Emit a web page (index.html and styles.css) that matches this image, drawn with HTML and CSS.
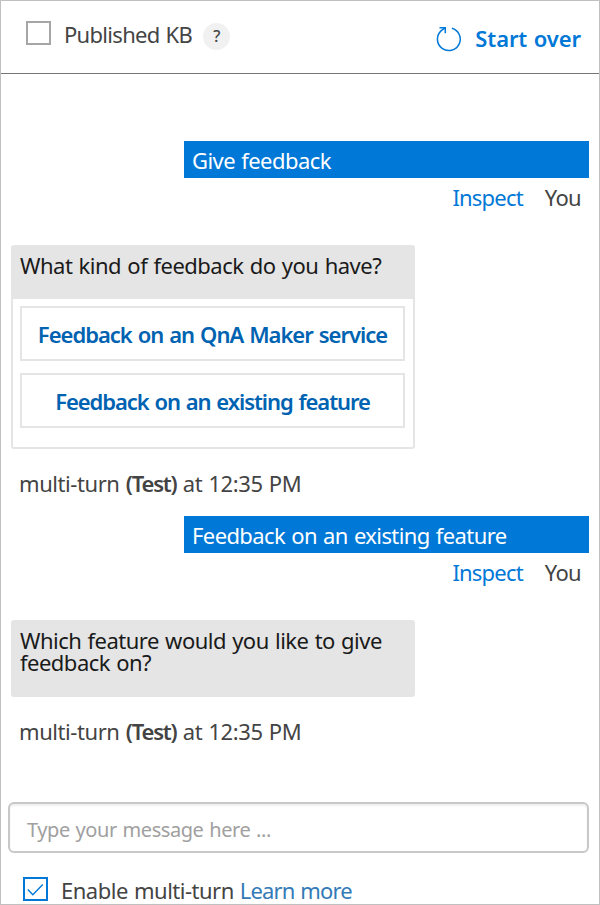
FILE: index.html
```html
<!DOCTYPE html>
<html lang="en">
<head>
<meta charset="utf-8">
<title>Test panel</title>
<link rel="stylesheet" href="styles.css">
</head>
<body>
<main class="panel">
  <header class="header">
    <span class="checkbox"></span>
    <span class="published">Published KB</span>
    <span class="help">?</span>
    <a class="start-over">
      <svg class="restart" width="26" height="26" viewBox="0 0 26 26" fill="none" stroke="#0078d7" stroke-width="1.5"><path d="M15.9 2.2A11.4 11.4 0 1 1 5 4.9L9 1.8"/><path d="M3.5 1.7H9.3V7.3"/></svg>
      <span class="start-label">Start over</span>
    </a>
  </header>
  <section class="chat">
    <div class="sent give">Give feedback</div>
    <div class="sent-meta"><a class="inspect">Inspect</a><span class="you">You</span></div>
    <div class="card">
      <div class="question">What kind of feedback do you have?</div>
      <div class="options">
        <button class="option">Feedback on an QnA Maker service</button>
        <button class="option narrow">Feedback on an existing feature</button>
      </div>
    </div>
    <div class="bot-meta">multi-turn <b>(Test)</b> at 12:35 PM</div>
    <div class="sent second">Feedback on an existing feature</div>
    <div class="sent-meta"><a class="inspect">Inspect</a><span class="you">You</span></div>
    <div class="reply">Which feature would you like to give<br>feedback on?</div>
    <div class="bot-meta">multi-turn <b>(Test)</b> at 12:35 PM</div>
  </section>
  <footer class="footer">
    <div class="message">Type your message here ...</div>
    <div class="multi">
      <span class="checkbox checked"><svg width="21" height="21" viewBox="0 0 21 21" fill="none" stroke="#0078d7" stroke-width="1.4"><path d="M2.8 10.5L7.8 15.8L17.8 5.6"/></svg></span>
      <span class="enable">Enable multi-turn</span>
      <a class="learn">Learn more</a>
    </div>
  </footer>
</main>
</body>
</html>
```

FILE: styles.css
```css
* { box-sizing: border-box; }
body {
  margin: 0;
  background: #fff;
  color: #444;
  font-family: "Noto Sans", "Open Sans", sans-serif;
  font-size: 22px;
  line-height: 30px;
  letter-spacing: -0.5px;
  word-spacing: 1px;
}
.panel {
  width: 600px;
  height: 905px;
  border: 1px solid #c0c0c0;
  overflow: hidden;
  display: flex;
  flex-direction: column;
  white-space: nowrap;
}
.header {
  height: 73px;
  flex: none;
  border-bottom: 1px solid #767676;
  display: flex;
  align-items: flex-start;
  padding: 20px 18px 0 25px;
}
.checkbox {
  width: 25px;
  height: 24px;
  flex: none;
  border: 2px solid #a6a6a6;
}
.published { margin: -2px 0 0 13px; width: 129px; letter-spacing: -0.7px; }
.help {
  width: 27px;
  height: 27px;
  margin: 2px 0 0 10px;
  border-radius: 50%;
  background: #f1f1f1;
  font-size: 16px;
  font-weight: 500;
  line-height: 27px;
  text-align: center;
}
.start-over {
  margin-left: auto;
  display: flex;
  color: #0078d7;
}
.restart { margin: 5px 13px 0 0; }
.start-label { font-weight: 600; margin-top: 2px; letter-spacing: -0.1px; }
.chat { flex: none; height: 728px; padding: 67px 10px 0; }
.sent {
  width: 405px;
  height: 37px;
  margin-left: auto;
  padding: 4px 8px;
  background: #0078d7;
  color: #fff;
  letter-spacing: -0.6px;
}
.give { letter-spacing: -0.55px; }
.sent-meta {
  display: flex;
  justify-content: flex-end;
  gap: 22px;
  height: 30px;
  margin: 4px 8px 33px 0;
}
.inspect { color: #0078d7; letter-spacing: -0.8px; }
.you { letter-spacing: -0.7px; }
.card {
  width: 404px;
  height: 204px;
  border: 2px solid #e5e5e5;
  border-radius: 3px;
}
.question { height: 52px; background: #e5e5e5; color: #1a1a1a; padding: 3px 7px; letter-spacing: -0.5px; }
.options { display: grid; gap: 12px; padding: 7px 8px 0 7px; }
.option {
  height: 55px;
  padding: 0;
  border: 2px solid #e5e5e5;
  background: #fff;
  color: #0063b1;
  font: 600 22px/30px "Noto Sans", "Open Sans", sans-serif;
  letter-spacing: -1px;
  word-spacing: 1.2px;
}
.narrow { letter-spacing: -1.07px; }
.bot-meta { margin: 19px 0 0 8px; height: 31px; letter-spacing: -0.43px; }
.bot-meta b { font-weight: 600; letter-spacing: -1.2px; }
.second { margin-top: 17px; }
.reply {
  width: 404px;
  height: 77px;
  padding: 9px 9px;
  border-radius: 3px;
  background: #e5e5e5;
  color: #1a1a1a;
  line-height: 22px;
  letter-spacing: -0.51px;
}
.footer { padding: 0 10px 0 7px; }
.message {
  height: 51px;
  border: 2px solid #c8c8c8;
  border-radius: 6px;
  box-shadow: inset 0 2px 2px #f0f0f0;
  padding: 11px 17px;
  font-size: 20px;
  line-height: 30px;
  letter-spacing: -0.43px;
  color: #a0a0a0;
}
.multi { display: flex; padding: 24px 0 0 15px; }
.checked { border-color: #0078d7; }
.checked svg { display: block; }
.enable { margin: -2px 6px 0 13px; letter-spacing: -0.5px; }
.learn { margin-top: -2px; color: #337ab7; letter-spacing: -0.85px; }
```
